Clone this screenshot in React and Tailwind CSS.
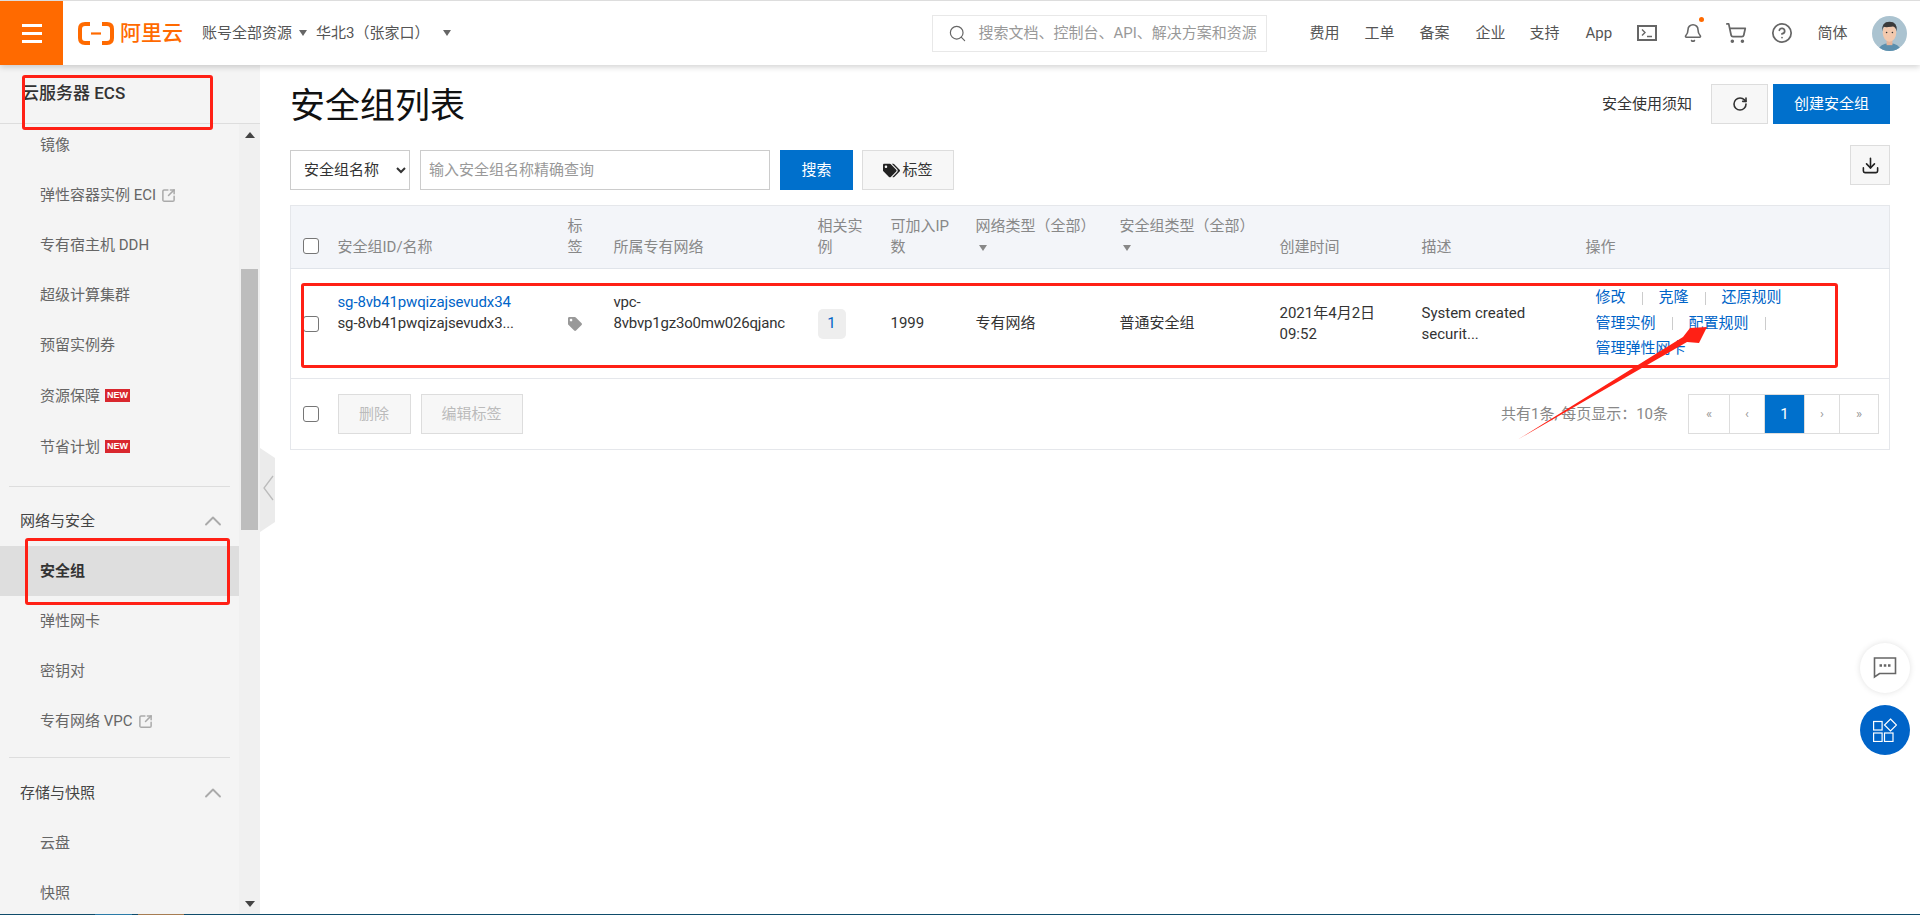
import React from 'react';
import { Search, Bell, ShoppingCart, CircleHelp, RotateCw, Download, ChevronUp, SquareArrowOutUpRight } from 'lucide-react';
import { FaTag, FaTags } from 'react-icons/fa';

const topLinks = [
    { label: '费用', cls: 'w-[55px]' },
    { label: '工单', cls: 'w-[55px]' },
    { label: '备案', cls: 'w-[56px]' },
    { label: '企业', cls: 'w-[54px]' },
    { label: '支持', cls: 'w-[56px]' },
    { label: 'App', cls: 'w-[52px]' },
];

const Caret = ({ className }) => (
    <span className={`inline-block w-0 h-0 border-x-[4px] border-x-transparent border-t-[6px] border-t-[#666] ${className || ''}`} />
);

const Checkbox = () => (
    <input type="checkbox" className="appearance-none block w-[16px] h-[16px] bg-white border border-[#767676] rounded-[3px]" />
);

const MenuItem = ({ label, badge, ext, active, tall }) => (
    <div className={`flex items-center pl-[40px] text-[15px] ${tall ? 'h-[52px]' : 'h-[50px]'} ${active ? 'bg-[#dedede] font-bold text-[#333]' : 'text-[#666]'}`}>
        <span>{label}</span>
        {badge && <span className="ml-[5px] mb-[2px] w-[25px] h-[13px] bg-[#d9272e] text-white text-[9px] font-bold leading-[13px] text-center font-['Liberation_Sans']">NEW</span>}
        {ext && <SquareArrowOutUpRight size={15} className="ml-[5px] text-[#aaa]" strokeWidth={2.4} />}
    </div>
);

const MenuGroup = ({ label }) => (
    <div className="flex items-center justify-between h-[50px] pl-[20px] pr-[12px] text-[15px] text-[#444]">
        <span>{label}</span>
        <ChevronUp size={28} className="text-[#aaa]" strokeWidth={1.6} />
    </div>
);

const Divider = () => <div className="mx-[9px] border-t border-[#ddd]" />;

const Sep = () => <span className="mx-[16px] w-px h-[13px] bg-[#ccc]" />;

const Th = ({ children, cls }) => (
    <th className={`align-bottom pb-[10px] text-left font-normal text-[#888] leading-[21px] ${cls || ''}`}>{children}</th>
);

const HeadCaret = () => (
    <div className="flex items-center h-[21px] pl-[3px]"><Caret className="!border-t-[#888]" /></div>
);

const Page = ({ children, cls, active }) => (
    <div className={`flex items-center justify-center h-full border-l border-[#ddd] first:border-l-0 ${cls} ${active ? 'bg-[#0070cc] text-white text-[15px]' : 'text-[#999] text-[13px]'}`}>{children}</div>
);

export default function App() {
    return (
        <div className="relative w-full h-screen overflow-hidden flex flex-col bg-white text-[15px] text-[#333] font-[Roboto,'Noto_Sans_CJK_SC',sans-serif]">
            {/* top bar */}
            <header className="relative z-10 flex items-center h-[65px] shrink-0 border-t border-[#ddd] bg-white shadow-[0_2px_6px_rgba(0,0,0,0.18)]">
                <div className="flex flex-col items-center justify-center gap-[5px] w-[63px] h-full bg-[#ff6a00]">
                    <span className="w-[20px] h-[3px] bg-white" />
                    <span className="w-[20px] h-[3px] bg-white" />
                    <span className="w-[20px] h-[3px] bg-white" />
                </div>
                <div className="flex items-center ml-[15px] w-[124px] text-[#ff6a00]">
                    <svg width="36" height="23" viewBox="0 0 36 23" fill="none" stroke="#ff6a00" strokeWidth="4">
                        <path d="M12 2 H7 Q2 2 2 7 V16 Q2 21 7 21 H12" />
                        <path d="M24 2 H29 Q34 2 34 7 V16 Q34 21 29 21 H24" />
                        <path d="M13 11.5 H23" strokeWidth="2.2" />
                    </svg>
                    <span className="ml-[6px] text-[21px] font-medium leading-none">阿里云</span>
                </div>
                <span className="text-[#555]">账号全部资源</span>
                <Caret className="ml-[7px]" />
                <span className="ml-[9px] text-[#555]">华北3（张家口）</span>
                <Caret className="ml-[14px]" />
                <div className="flex items-center ml-[481px] w-[335px] h-[37px] pl-[15px] border border-[#e8e8e8] overflow-hidden">
                    <Search size={19} className="text-[#666] shrink-0" strokeWidth={1.5} />
                    <span className="ml-[11px] whitespace-nowrap text-[#999]">搜索文档、控制台、API、解决方案和资源</span>
                </div>
                <div className="flex items-center ml-[42px] text-[#555]">
                    {topLinks.map(link => (
                        <span key={link.label} className={link.cls}>{link.label}</span>
                    ))}
                    <svg width="20" height="16" viewBox="0 0 20 16" fill="none" stroke="#666" strokeWidth="2" className="mr-[26px]">
                        <rect x="1" y="1" width="18" height="14" />
                        <path d="M5 4.5 L8 7.5 L5 10.5 M10 11.5 H15" strokeWidth="1.4" />
                    </svg>
                    <div className="relative mr-[22px]">
                        <Bell size={20} strokeWidth={1.9} className="text-[#666]" />
                        <span className="absolute -top-[6px] right-[-1px] w-[5px] h-[5px] rounded-full bg-[#ff6a00]" />
                    </div>
                    <ShoppingCart size={22} strokeWidth={1.9} className="mr-[24px] text-[#666]" />
                    <CircleHelp size={22} strokeWidth={1.9} className="mr-[24px] text-[#666]" />
                    <span>简体</span>
                    <svg width="35" height="35" viewBox="0 0 36 36" className="ml-[25px]">
                        <clipPath id="avatarClip"><circle cx="18" cy="18" r="18" /></clipPath>
                        <g clipPath="url(#avatarClip)">
                            <rect width="36" height="36" fill="#abc3d0" />
                            <path d="M6 36 Q8 28 18 28 Q28 28 30 36 Z" fill="#5b8fae" />
                            <rect x="15" y="23" width="6" height="7" fill="#e5b59b" />
                            <ellipse cx="18" cy="17" rx="7" ry="9.5" fill="#f2c9ae" />
                            <path d="M10.5 16 Q9.5 6 18 6 Q26.5 6 25.5 16 Q24 10 20 11 Q14 12 12 11 Q11 13 10.5 16 Z" fill="#3a3a3a" />
                            <circle cx="15" cy="17" r="0.8" fill="#333" />
                            <circle cx="21" cy="17" r="0.8" fill="#333" />
                        </g>
                    </svg>
                </div>
            </header>

            <div className="flex flex-1 min-h-0">
                {/* sidebar */}
                <aside className="flex flex-col w-[260px] shrink-0 bg-[#f4f4f4]">
                    <div className="flex items-center h-[59px] shrink-0 pl-[22px] border-b border-[#ddd]">
                        <span className="text-[17px] font-medium text-[#333]">云服务器 ECS</span>
                    </div>
                    <div className="flex flex-1 min-h-0">
                        <nav className="w-[239px] overflow-hidden">
                            <div className="-mt-[4px]">
                                <MenuItem label="镜像" />
                                <MenuItem label="弹性容器实例 ECI" ext />
                                <MenuItem label="专有宿主机 DDH" />
                                <MenuItem label="超级计算集群" />
                                <MenuItem label="预留实例券" />
                                <MenuItem label="资源保障" badge tall />
                                <MenuItem label="节省计划" badge />
                                <div className="h-[14px]" />
                                <Divider />
                                <div className="h-[9px]" />
                                <MenuGroup label="网络与安全" />
                                <MenuItem label="安全组" active />
                                <MenuItem label="弹性网卡" />
                                <MenuItem label="密钥对" />
                                <MenuItem label="专有网络 VPC" ext />
                                <div className="h-[11px]" />
                                <Divider />
                                <div className="h-[10px]" />
                                <MenuGroup label="存储与快照" />
                                <MenuItem label="云盘" />
                                <MenuItem label="快照" />
                            </div>
                        </nav>
                        <div className="flex flex-col items-center w-[21px] bg-[#f0f0f0]">
                            <span className="mt-[8px] w-0 h-0 border-x-[5px] border-x-transparent border-b-[6px] border-b-[#444]" />
                            <div className="mt-[131px] w-[17px] h-[261px] bg-[#bdbdbd]" />
                            <span className="mt-auto mb-[7px] w-0 h-0 border-x-[5px] border-x-transparent border-t-[6px] border-t-[#444]" />
                        </div>
                    </div>
                </aside>

                {/* main */}
                <main className="flex-1 min-w-0 pl-[30px] pr-[30px]">
                    <div className="flex items-center justify-between h-[40px] mt-[19px]">
                        <h1 className="text-[35px] font-normal text-[#111] leading-none mt-[4px]">安全组列表</h1>
                        <div className="flex items-center">
                            <span className="text-[#333] mr-[19px]">安全使用须知</span>
                            <button className="flex items-center justify-center w-[57px] h-[40px] bg-[#f7f7f7] border border-[#ddd]">
                                <RotateCw size={16} strokeWidth={2.4} className="text-[#333]" />
                            </button>
                            <button className="ml-[5px] w-[117px] h-[40px] bg-[#0070cc] text-white">创建安全组</button>
                        </div>
                    </div>

                    <div className="flex items-start justify-between mt-[21px] h-[60px]">
                        <div className="flex items-center mt-[5px]">
                            <select defaultValue="name" className="w-[120px] h-[40px] pl-[9px] bg-white border border-[#ccc] text-[#333] outline-none">
                                <option value="name">安全组名称</option>
                            </select>
                            <input placeholder="输入安全组名称精确查询" className="ml-[10px] w-[350px] h-[40px] px-[8px] border border-[#ccc] outline-none placeholder:text-[#999]" />
                            <button className="ml-[10px] w-[73px] h-[40px] bg-[#0070cc] text-white">搜索</button>
                            <button className="flex items-center justify-center ml-[9px] w-[92px] h-[40px] bg-[#f7f7f7] border border-[#ddd] text-[#333]">
                                <FaTags size={17} className="text-[#222] mr-[2px]" />
                                标签
                            </button>
                        </div>
                        <button className="flex items-center justify-center w-[40px] h-[40px] bg-[#f7f7f7] border border-[#ddd]">
                            <Download size={19} strokeWidth={2} className="text-[#222]" />
                        </button>
                    </div>

                    <table className="w-full table-fixed border border-[#e5e7eb] border-collapse">
                        <thead>
                            <tr className="h-[63px] bg-[#f3f5f9] border-b border-[#e0e4ea]">
                                <th className="w-[47px] align-bottom pb-[14px] pl-[12px]"><Checkbox /></th>
                                <Th cls="w-[230px]">安全组ID/名称</Th>
                                <Th cls="w-[46px]">标<br />签</Th>
                                <Th cls="w-[204px]">所属专有网络</Th>
                                <Th cls="w-[73px]">相关实<br />例</Th>
                                <Th cls="w-[85px]">可加入IP<br />数</Th>
                                <Th cls="w-[144px]">网络类型（全部）<HeadCaret /></Th>
                                <Th cls="w-[160px]">安全组类型（全部）<HeadCaret /></Th>
                                <Th cls="w-[142px]">创建时间</Th>
                                <Th cls="w-[164px]">描述</Th>
                                <Th>操作</Th>
                            </tr>
                        </thead>
                        <tbody>
                            <tr className="h-[110px] border-b border-[#e5e7eb] leading-[21px]">
                                <td className="pl-[12px]"><Checkbox /></td>
                                <td className="pb-[21px] tracking-[-0.13px]">
                                    <div className="text-[#0064c8]">sg-8vb41pwqizajsevudx34</div>
                                    <div>sg-8vb41pwqizajsevudx3...</div>
                                </td>
                                <td><FaTag size={14} className="text-[#999]" /></td>
                                <td className="pb-[21px] tracking-[-0.2px]">vpc-<br />8vbvp1gz3o0mw026qjanc</td>
                                <td>
                                    <span className="flex items-center justify-center w-[28px] h-[30px] rounded-[5px] bg-[#eee] text-[#0064c8]">1</span>
                                </td>
                                <td>1999</td>
                                <td>专有网络</td>
                                <td>普通安全组</td>
                                <td>2021年4月2日<br />09:52</td>
                                <td>System created<br />securit...</td>
                                <td className="pl-[10px] text-[#0064c8] leading-[25.5px]">
                                    <div className="flex items-center">修改<Sep />克隆<Sep />还原规则</div>
                                    <div className="flex items-center">管理实例<Sep />配置规则<Sep /></div>
                                    <div>管理弹性网卡</div>
                                </td>
                            </tr>
                            <tr className="h-[71px]">
                                <td className="pl-[12px]"><Checkbox /></td>
                                <td colSpan={10}>
                                    <div className="flex items-center justify-between pr-[10px]">
                                        <div className="flex items-center gap-[10px]">
                                            <button className="w-[73px] h-[40px] bg-[#f7f7f7] border border-[#ddd] text-[#bbb]">删除</button>
                                            <button className="w-[102px] h-[40px] bg-[#f7f7f7] border border-[#ddd] text-[#bbb]">编辑标签</button>
                                        </div>
                                        <div className="flex items-center">
                                            <span className="mr-[20px] text-[#888]">共有1条, 每页显示：10条</span>
                                            <div className="flex items-center h-[40px] border border-[#ddd]">
                                                <Page cls="w-[40px]">«</Page>
                                                <Page cls="w-[35px]">‹</Page>
                                                <Page cls="w-[40px]" active>1</Page>
                                                <Page cls="w-[35px]">›</Page>
                                                <Page cls="w-[39px]">»</Page>
                                            </div>
                                        </div>
                                    </div>
                                </td>
                            </tr>
                        </tbody>
                    </table>
                </main>
            </div>

            {/* strip of the desktop behind the window */}
            <div className="flex h-[1px] shrink-0 bg-[#0f4c6b]">
                <span className="ml-[95px] w-[37px] bg-[#2a7ba8]" />
                <span className="ml-[6px] w-[46px] bg-[#a67c52]" />
            </div>

            {/* sidebar collapse handle */}
            <svg width="16" height="84" viewBox="0 0 16 84" className="absolute left-[260px] top-[448px]">
                <path d="M0 0 L15 10 V74 L0 84 Z" fill="#ebebeb" />
                <path d="M13 28 L4 40 L13 52" fill="none" stroke="#bbb" strokeWidth="1.3" />
            </svg>

            {/* annotation marks */}
            <div className="absolute left-[22px] top-[75px] w-[191px] h-[55px] border-[3px] border-[#ff2015] rounded-[3px]" />
            <div className="absolute left-[25px] top-[538px] w-[205px] h-[67px] border-[3px] border-[#ff2015] rounded-[3px]" />
            <div className="absolute left-[301px] top-[283px] w-[1537px] h-[85px] border-[3px] border-[#ff2015] rounded-[3px]" />
            <svg width="200" height="120" viewBox="0 0 200 120" className="absolute left-[1515px] top-[322px]">
                <path d="M2 118 L168 15 L175 6 L192 5 L184 21 L172 20 Z" fill="#ff2015" />
            </svg>

            {/* floating buttons */}
            <div className="absolute left-[1860px] top-[643px] flex items-center justify-center w-[50px] h-[50px] rounded-full bg-white shadow-[0_0_6px_rgba(0,0,0,0.12)]">
                <svg width="24" height="24" viewBox="0 0 24 24" fill="none">
                    <path d="M1.5 2 H22.5 V17.5 H6.5 L1.5 21 Z" stroke="#666" strokeWidth="1.6" />
                    <path d="M6.5 9.5 H9 M10.8 9.5 H13.3 M15 9.5 H17.5" stroke="#666" strokeWidth="2.4" />
                </svg>
            </div>
            <div className="absolute left-[1860px] top-[705px] flex items-center justify-center w-[50px] h-[50px] rounded-full bg-[#0064c8]">
                <svg width="24" height="24" viewBox="0 0 24 24" fill="none" stroke="white" strokeWidth="1.2">
                    <rect x="0.6" y="3.5" width="8.5" height="8.5" />
                    <rect x="0.6" y="15" width="8.5" height="8.5" />
                    <rect x="11.5" y="15" width="8.5" height="8.5" />
                    <path d="M17.5 1 L23.5 7 L17.5 13 L11.5 7 Z" />
                </svg>
            </div>
        </div>
    );
}
